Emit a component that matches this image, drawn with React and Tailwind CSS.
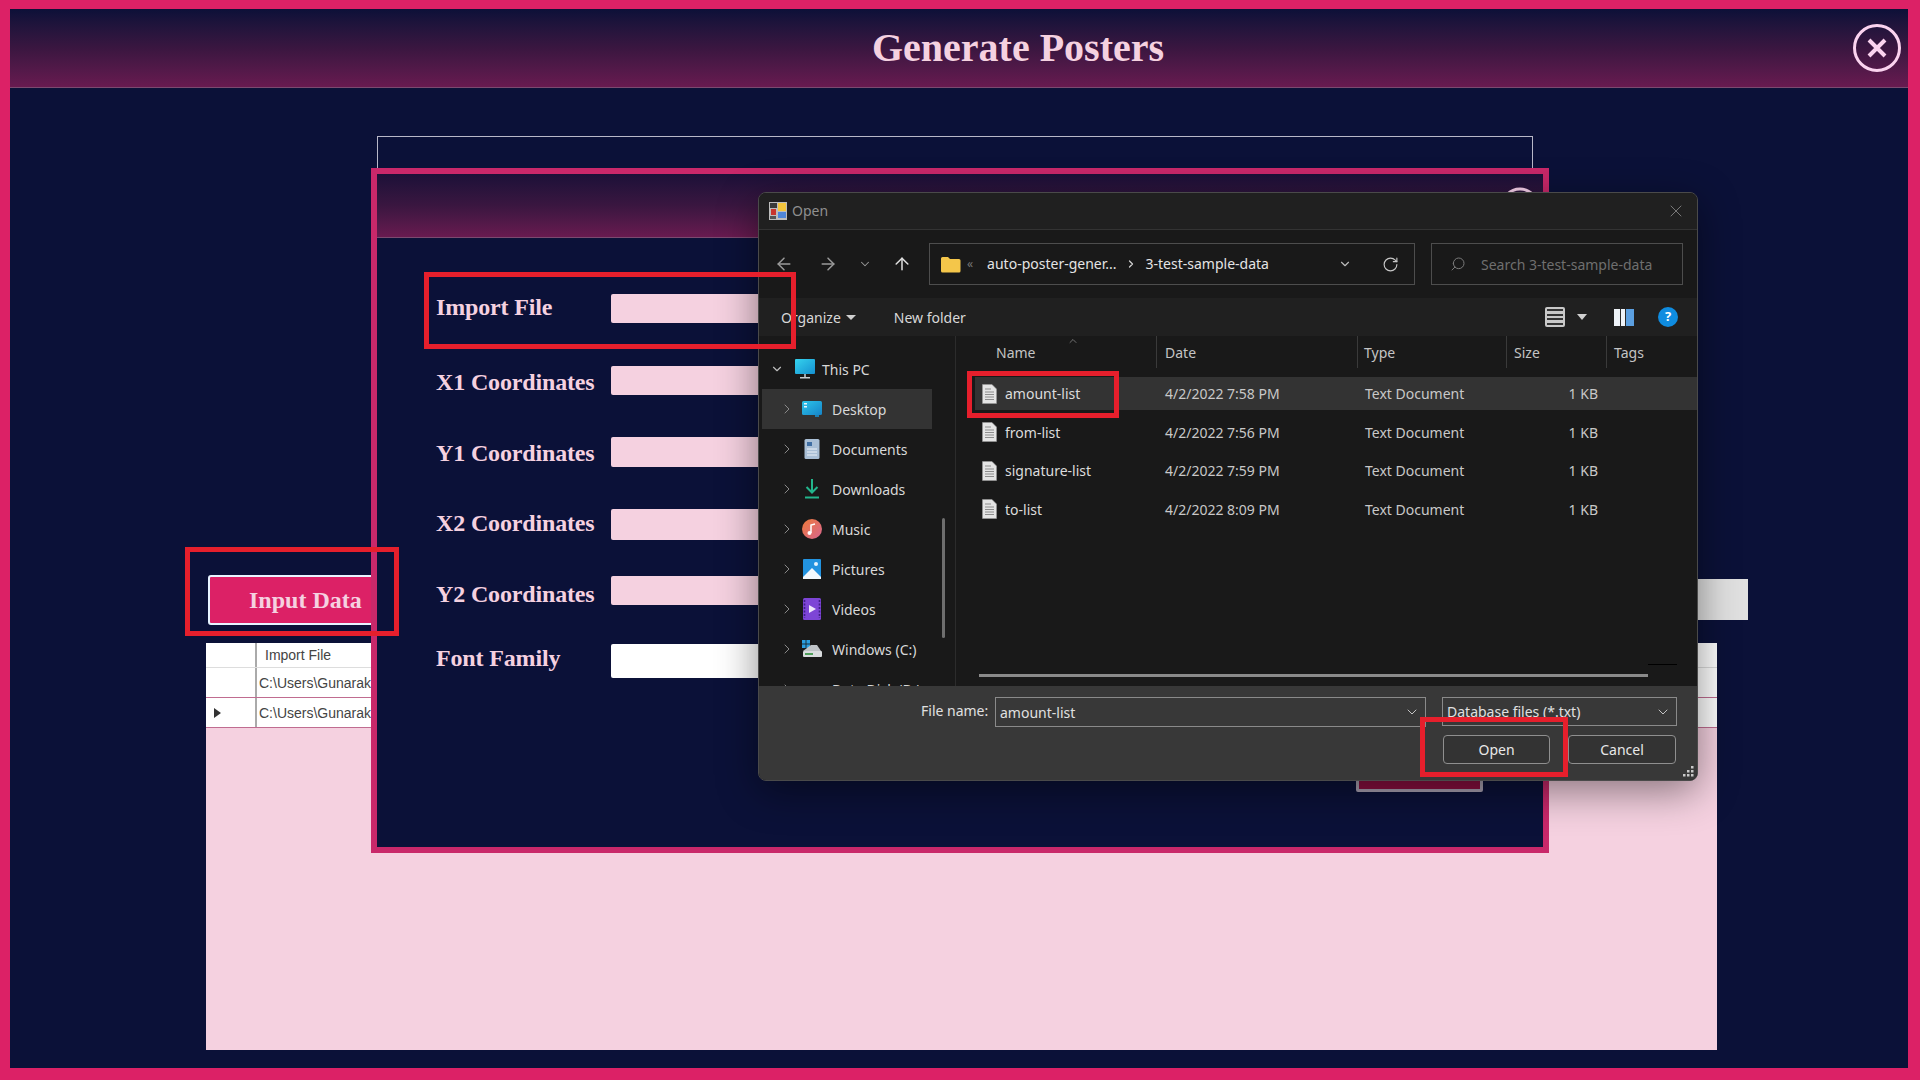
import React from 'react';
import { ArrowLeft, ArrowRight, ArrowUp, ChevronDown, ChevronRight, ChevronUp, RotateCw, Search, X } from 'lucide-react';

const serif = "font-['Liberation_Serif',serif] font-bold";
const ui = "font-['Noto_Sans',sans-serif]";

// form rows of the panel behind the dialog
const formRows = [
  { label: 'Import File', row: 'mt-[56px] h-[29px]', input: 'bg-[#f5d1e0]', text: '-mt-[3px]' },
  { label: 'X1 Coordinates', row: 'mt-[43px] h-[29px]', input: 'bg-[#f5d1e0]', text: 'mt-[3px]' },
  { label: 'Y1 Coordinates', row: 'mt-[42px] h-[30px]', input: 'bg-[#f5d1e0]', text: 'mt-[1px]' },
  { label: 'X2 Coordinates', row: 'mt-[42px] h-[31px]', input: 'bg-[#f5d1e0]', text: '-mt-[3px]' },
  { label: 'Y2 Coordinates', row: 'mt-[36px] h-[29px]', input: 'bg-[#f5d1e0]', text: 'mt-[7px]' },
  { label: 'Font Family', row: 'mt-[39px] h-[34px]', input: 'bg-white', text: '-mt-[6px]' },
];

const FileIcon = () => (
  <svg width="15" height="20" viewBox="0 0 15 20" className="shrink-0">
    <path d="M0.5 0.5H10L14.5 5V19.5H0.5Z" fill="#e4e4e4" stroke="#9a9a9a" strokeWidth="0.6" />
    <path d="M3 5H9M3 8H12M3 10.5H12M3 13H12M3 15.5H12" stroke="#8c8c8c" strokeWidth="1" />
  </svg>
);

const DesktopIcon = () => (
  <svg width="20" height="18" viewBox="0 0 20 18">
    <defs>
      <linearGradient id="deskGrad" x1="0" y1="0" x2="1" y2="1">
        <stop offset="0" stopColor="#2cc4ea" />
        <stop offset="1" stopColor="#1684c8" />
      </linearGradient>
    </defs>
    <rect x="0" y="1" width="20" height="14" rx="1.5" fill="url(#deskGrad)" />
    <rect x="2" y="3" width="3" height="1.5" fill="#e8f6fc" />
    <rect x="2" y="6" width="3" height="1.5" fill="#e8f6fc" />
    <rect x="13" y="15" width="4" height="2" fill="#1a7fb3" />
  </svg>
);

const DocumentsIcon = () => (
  <svg width="16" height="20" viewBox="0 0 16 20">
    <rect x="0.5" y="0" width="15" height="20" rx="1.5" fill="#a9bfd6" />
    <rect x="3" y="3" width="5" height="4" fill="#3f6ea3" />
    <path d="M3 10H13M3 13H13M3 16H13" stroke="#ecf2f8" strokeWidth="1.2" />
  </svg>
);

const DownloadsIcon = () => (
  <svg width="16" height="20" viewBox="0 0 16 20" fill="none" stroke="#23b58c" strokeWidth="2">
    <path d="M8 0V13M2.5 8L8 13.5L13.5 8" />
    <path d="M1 18.5H15" />
  </svg>
);

const MusicIcon = () => (
  <svg width="20" height="20" viewBox="0 0 20 20">
    <defs>
      <linearGradient id="musicGrad" x1="0" y1="0" x2="1" y2="1">
        <stop offset="0" stopColor="#ec7a3a" />
        <stop offset="1" stopColor="#d8658f" />
      </linearGradient>
    </defs>
    <circle cx="10" cy="10" r="10" fill="url(#musicGrad)" />
    <path d="M9 14V6L13 5" fill="none" stroke="#fff" strokeWidth="1.5" />
    <circle cx="7.5" cy="14" r="2" fill="#fff" />
  </svg>
);

const PicturesIcon = () => (
  <svg width="18" height="20" viewBox="0 0 18 20">
    <rect x="0" y="0" width="18" height="20" rx="1" fill="#2293e0" />
    <circle cx="13" cy="5" r="2" fill="#e6f4fd" />
    <path d="M0 18L9 9L18 18V20H0Z" fill="#f2f8fd" />
  </svg>
);

const VideosIcon = () => (
  <svg width="18" height="22" viewBox="0 0 18 22">
    <rect x="0" y="0" width="18" height="22" rx="1.5" fill="#7d45d6" />
    <path d="M6 7L13 11L6 15Z" fill="#efe6fb" />
    <path d="M1.5 2V20M16.5 2V20" stroke="#3f1e86" strokeWidth="1.6" strokeDasharray="2 1.5" />
  </svg>
);

const DriveIcon = () => (
  <svg width="20" height="18" viewBox="0 0 20 18">
    <rect x="0" y="0" width="3.6" height="3.6" fill="#2a9ee0" />
    <rect x="4.4" y="0" width="3.6" height="3.6" fill="#2a9ee0" />
    <rect x="0" y="4.4" width="3.6" height="3.6" fill="#2a9ee0" />
    <rect x="4.4" y="4.4" width="3.6" height="3.6" fill="#2a9ee0" />
    <path d="M9 5H15L19 11H1Z" fill="#bfc3c7" />
    <rect x="1" y="11" width="19" height="6" rx="1" fill="#d9dcde" />
    <rect x="3" y="13" width="8" height="2" fill="#4f9e5b" />
  </svg>
);

const ThisPcIcon = () => (
  <svg width="20" height="20" viewBox="0 0 20 20">
    <defs>
      <linearGradient id="pcGrad" x1="0" y1="0" x2="1" y2="1">
        <stop offset="0" stopColor="#35d3ee" />
        <stop offset="1" stopColor="#1590d0" />
      </linearGradient>
    </defs>
    <rect x="0" y="0" width="20" height="15" rx="1" fill="url(#pcGrad)" />
    <rect x="9" y="15" width="2" height="3" fill="#9aa4ab" />
    <rect x="5" y="18" width="10" height="1.5" fill="#c5ccd1" />
  </svg>
);

const AppIcon = () => (
  <svg width="18" height="18" viewBox="0 0 18 18">
    <rect x="0" y="0" width="18" height="18" fill="#bdbdbd" />
    <rect x="1" y="1" width="7" height="5" fill="#3a3a3a" />
    <rect x="9" y="1" width="8" height="8" fill="#f2c53d" />
    <rect x="2" y="7" width="5" height="6" fill="#c8352d" />
    <rect x="9" y="10" width="8" height="6" fill="#4f86d9" />
    <rect x="1" y="14" width="6" height="3" fill="#555" />
  </svg>
);

const navItems = [
  { name: 'Desktop', Icon: DesktopIcon, active: true },
  { name: 'Documents', Icon: DocumentsIcon },
  { name: 'Downloads', Icon: DownloadsIcon },
  { name: 'Music', Icon: MusicIcon },
  { name: 'Pictures', Icon: PicturesIcon },
  { name: 'Videos', Icon: VideosIcon },
  { name: 'Windows (C:)', Icon: DriveIcon },
  { name: 'Data Disk (D:)', Icon: null },
];

const files = [
  { name: 'amount-list', date: '4/2/2022 7:58 PM', selected: true },
  { name: 'from-list', date: '4/2/2022 7:56 PM' },
  { name: 'signature-list', date: '4/2/2022 7:59 PM' },
  { name: 'to-list', date: '4/2/2022 8:09 PM' },
];

const RedBox = ({ className }) => (
  <div className={`absolute border-[5px] border-[#e61f2c] pointer-events-none ${className}`} />
);

function OpenDialog() {
  return (
    <div className={`${ui} absolute left-[758px] top-[192px] w-[940px] h-[589px] rounded-[8px] overflow-hidden flex flex-col text-[14px] text-[#d8d8d8] bg-[#191919] border border-[#4a4a4a] shadow-[0_10px_40px_rgba(0,0,0,0.45)]`}>
      {/* Title bar */}
      <div className="h-[37px] shrink-0 bg-[#202020] border-b border-[#333] flex items-center pl-[10px] pr-[11px]">
        <AppIcon />
        <span className="ml-[5px] -mt-[2px] text-[#8f8f8f]">Open</span>
        <X className="ml-auto h-[20px] w-[20px] text-[#8a8a8a]" strokeWidth={1} />
      </div>

      {/* Address bar */}
      <div className="h-[68px] shrink-0 flex items-center pl-[15px]">
        <ArrowLeft className="h-[20px] w-[20px] text-[#9a9a9a]" strokeWidth={1.8} />
        <ArrowRight className="ml-[24px] h-[20px] w-[20px] text-[#9a9a9a]" strokeWidth={1.8} />
        <ChevronDown className="ml-[20px] h-[14px] w-[14px] text-[#9a9a9a]" strokeWidth={1.8} />
        <ArrowUp className="ml-[20px] h-[20px] w-[20px] text-[#e0e0e0]" strokeWidth={1.8} />
        <div className="ml-[17px] w-[486px] h-[42px] border border-[#4d4d4d] flex items-center pl-[10px] pr-[15px]">
          <svg width="21" height="18" viewBox="0 0 21 18" className="shrink-0">
            <path d="M1 3.5A1.5 1.5 0 0 1 2.5 2H8L10 4H19A1.5 1.5 0 0 1 20.5 5.5V16A1.5 1.5 0 0 1 19 17.5H2.5A1.5 1.5 0 0 1 1 16Z" fill="#f4c64a" />
          </svg>
          <span className="ml-[6px] text-[12px] text-[#777]">«</span>
          <span className="ml-[14px] -mt-[2px] text-[#e4e4e4]">auto-poster-gener...</span>
          <ChevronRight className="ml-[8px] h-[12px] w-[12px] text-[#d0d0d0]" strokeWidth={2.5} />
          <span className="ml-[9px] -mt-[2px] text-[#e4e4e4]">3-test-sample-data</span>
          <ChevronDown className="ml-auto h-[14px] w-[14px] text-[#bbb]" strokeWidth={2} />
          <RotateCw className="ml-[30px] h-[17px] w-[17px] text-[#c8c8c8]" strokeWidth={1.6} />
        </div>
        <div className="ml-[16px] w-[252px] h-[42px] border border-[#4d4d4d] flex items-center pl-[18px] text-[#6f6f6f]">
          <Search className="h-[16px] w-[16px] -scale-x-100 text-[#7a7a7a]" strokeWidth={1.5} />
          <span className="ml-[15px] whitespace-nowrap">Search 3-test-sample-data</span>
        </div>
      </div>

      {/* Command bar */}
      <div className="h-[38px] shrink-0 bg-[#202020] flex items-center pl-[22px] pr-[19px]">
        <span>Organize</span>
        <span className="ml-[5px] w-0 h-0 border-x-[5px] border-x-transparent border-t-[5px] border-t-[#d0d0d0]" />
        <span className="ml-[38px]">New folder</span>
        <div className="ml-auto flex items-center">
          <div className="w-[20px] h-[20px] rounded-[2px] bg-[#c8c8c8] flex flex-col justify-evenly px-[2px]">
            <div className="h-[2px] bg-[#333]" />
            <div className="h-[2px] bg-[#333]" />
            <div className="h-[2px] bg-[#333]" />
            <div className="h-[2px] bg-[#333]" />
          </div>
          <span className="ml-[12px] w-0 h-0 border-x-[5px] border-x-transparent border-t-[6px] border-t-[#d0d0d0]" />
          <div className="ml-[27px] w-[20px] h-[17px] flex">
            <div className="w-[6px] bg-[#eef3f8]" />
            <div className="w-px bg-[#2a2a2a]" />
            <div className="w-[4px] bg-[#eef3f8]" />
            <div className="w-px bg-[#2a2a2a]" />
            <div className="flex-1 bg-[#5b9fe0]" />
          </div>
          <div className="ml-[24px] w-[20px] h-[20px] rounded-full bg-[#0f8ce0] text-white text-[13px] font-bold flex items-center justify-center">?</div>
        </div>
      </div>

      {/* Nav pane and file list */}
      <div className="h-[350px] shrink-0 flex overflow-hidden">
        <div className="relative w-[197px] shrink-0 border-r border-[#2c2c2c] pt-[13px] overflow-hidden">
          <div className="h-[40px] flex items-center pl-[11px]">
            <ChevronDown className="h-[14px] w-[14px] text-[#bdbdbd]" strokeWidth={2} />
            <span className="ml-[11px]"><ThisPcIcon /></span>
            <span className="ml-[7px]">This PC</span>
          </div>
          {navItems.map(({ name, Icon, active }) => (
            <div key={name} className={`ml-[3px] w-[170px] h-[40px] flex items-center pl-[17px] ${active ? 'bg-[#333333]' : ''}`}>
              <ChevronRight className="h-[16px] w-[16px] text-[#8a8a8a] shrink-0" strokeWidth={1.5} />
              <span className="ml-[7px] w-[20px] flex justify-center shrink-0">{Icon && <Icon />}</span>
              <span className="ml-[10px] whitespace-nowrap">{name}</span>
            </div>
          ))}
          <div className="absolute left-[183px] top-[182px] w-[3px] h-[120px] bg-[#6e6e6e] rounded-full" />
        </div>

        <div className="relative flex-1 min-w-0">
          <div className="h-[36px] mb-[5px] flex items-start text-[#c4c4c4]">
            <div className="w-[201px] h-[32px] border-r border-[#3a3a3a] pl-[40px] flex items-center relative">
              Name
              <ChevronUp className="absolute left-[111px] -top-[1px] h-[12px] w-[12px] text-[#8f8f8f]" strokeWidth={1.5} />
            </div>
            <div className="w-[201px] h-[32px] border-r border-[#3a3a3a] pl-[8px] flex items-center">Date</div>
            <div className="w-[149px] h-[32px] border-r border-[#3a3a3a] pl-[6px] flex items-center">Type</div>
            <div className="w-[100px] h-[32px] border-r border-[#3a3a3a] pl-[7px] flex items-center">Size</div>
            <div className="pl-[7px] h-[32px] flex items-center">Tags</div>
          </div>
          {files.map((f) => (
            <div key={f.name} className={`ml-[19px] h-[33px] mb-[5.6px] flex items-center text-[#c8c8c8] ${f.selected ? 'bg-[#333333]' : ''}`}>
              <div className="w-[30px] pl-[7px]"><FileIcon /></div>
              <span className="w-[160px] text-[#dcdcdc]">{f.name}</span>
              <span className="w-[200px]">{f.date}</span>
              <span className="w-[150px]">Text Document</span>
              <span className="w-[83px] text-right">1 KB</span>
            </div>
          ))}
          <div className="absolute left-[23px] top-[338px] w-[669px] h-[3px] bg-[#8a8a8a]" />
          <div className="absolute left-[692px] top-[328px] w-[29px] h-px bg-black" />
        </div>
      </div>

      {/* File name row and buttons */}
      <div className="relative flex-1 bg-[#383838]">
        <div className="pt-[11px] flex items-start text-[#e0e0e0]">
          <span className="ml-[162px] mt-[3px] w-[74px] whitespace-nowrap">File name:</span>
          <div className="w-[431px] h-[30px] border border-[#8a8a8a] flex items-center pl-[4px] pr-[5px]">
            amount-list
            <ChevronDown className="ml-auto h-[16px] w-[16px] text-[#c4c4c4]" strokeWidth={1.5} />
          </div>
          <div className="ml-[16px] w-[235px] h-[29px] border border-[#8a8a8a] flex items-center pl-[4px] pr-[5px]">
            Database files (*.txt)
            <ChevronDown className="ml-auto h-[16px] w-[16px] text-[#c4c4c4]" strokeWidth={1.5} />
          </div>
        </div>
        <div className="mt-[8px] flex justify-end gap-[18px] pr-[21px]">
          <div className="w-[107px] h-[29px] rounded-[4px] border border-[#8f8f8f] bg-[#333333] flex items-center justify-center text-[#e8e8e8]">Open</div>
          <div className="w-[108px] h-[29px] rounded-[4px] border border-[#8f8f8f] bg-[#333333] flex items-center justify-center text-[#e8e8e8]">Cancel</div>
        </div>
        <svg width="12" height="12" viewBox="0 0 12 12" className="absolute right-[2px] bottom-[2px]" fill="#c8c8c8">
          <rect x="8" y="0" width="2.5" height="2.5" />
          <rect x="4" y="4" width="2.5" height="2.5" />
          <rect x="8" y="4" width="2.5" height="2.5" />
          <rect x="0" y="8" width="2.5" height="2.5" />
          <rect x="4" y="8" width="2.5" height="2.5" />
          <rect x="8" y="8" width="2.5" height="2.5" />
        </svg>
      </div>
    </div>
  );
}

function App() {
  return (
    <div className="relative w-[1920px] h-[1080px] overflow-hidden bg-[#dc2166] pl-[10px] pr-[12px] pt-[9px] pb-[12px] flex flex-col">
      {/* Header */}
      <header className="relative h-[79px] shrink-0 bg-gradient-to-b from-[#0c1038] via-[#3a1640] to-[#681a50] border-b border-[#7a4a70] flex items-center justify-center">
        <h1 className={`${serif} ml-[118px] text-[40px] text-[#f5d1e0]`}>Generate Posters</h1>
        <svg width="48" height="48" viewBox="0 0 48 48" fill="none" stroke="#fbd3ef" className="absolute right-[7px] top-[15px]">
          <circle cx="24" cy="24" r="22.5" strokeWidth="3" />
          <path d="M16 16L32 32M32 16L16 32" strokeWidth="4" />
        </svg>
      </header>
      <main className="flex-1 bg-[#0b1138]" />

      {/* Outlined box behind the panel */}
      <div className="absolute left-[377px] top-[136px] w-[1156px] h-[40px] border border-[#b8b8c8]" />

      {/* Input Data button and the grey button on the far side */}
      <div className={`${serif} absolute left-[208px] top-[575px] w-[240px] h-[50px] bg-[#dc2166] border-2 border-[#e8f4ff] rounded-[3px] text-[24px] text-[#f5d1e0] pl-[39px] flex items-center`}>Input Data</div>
      <div className="absolute left-[1690px] top-[579px] w-[58px] h-[41px] bg-[#e0e0e0]" />

      {/* Data grid */}
      <div className="absolute left-[206px] top-[643px] w-[1511px] h-[407px] bg-[#f5d1e0] flex flex-col font-['Liberation_Sans',sans-serif] text-[14px] text-[#444]">
        <div className="h-[25px] flex bg-white border-b border-[#ddd]">
          <div className="w-[51px] border-r-2 border-[#aaa]" />
          <div className="flex-1 pl-[8px] pt-[1px] flex items-center">Import File</div>
        </div>
        <div className="h-[30px] flex bg-white border-b border-[#c06c90]">
          <div className="w-[51px] border-r-2 border-[#aaa]" />
          <div className="flex-1 pl-[2px] pt-[2px] flex items-center">C:\Users\Gunarakulan\Desktop</div>
        </div>
        <div className="h-[30px] flex bg-white border-b border-[#c06c90]">
          <div className="w-[51px] border-r-2 border-[#aaa] flex items-center pl-[8px]">
            <span className="w-0 h-0 border-y-[5px] border-y-transparent border-l-[7px] border-l-[#333]" />
          </div>
          <div className="flex-1 pl-[2px] pt-[2px] flex items-center">C:\Users\Gunarakulan\Desktop</div>
        </div>
      </div>

      {/* Panel with the form */}
      <div className="absolute left-[371px] top-[168px] w-[1178px] h-[685px] border-[6px] border-[#c9286a] bg-[#0b1138] flex flex-col">
        <div className="relative h-[64px] shrink-0 bg-gradient-to-b from-[#1c1038] via-[#3a1640] to-[#681a50] border-b border-[#7a4a70]">
          <svg width="40" height="40" viewBox="0 0 40 40" fill="none" stroke="#fbd3ef" strokeWidth="3" className="absolute left-[1123px] top-[13px]">
            <circle cx="20" cy="20" r="18" />
          </svg>
        </div>
        <div className="pl-[59px] flex flex-col">
          {formRows.map((r) => (
            <div key={r.label} className={`flex items-center ${r.row}`}>
              <span className={`${serif} ${r.text} w-[175px] whitespace-nowrap text-[24px] tracking-[-0.15px] text-[#f5d1e0]`}>{r.label}</span>
              <div className={`w-[240px] h-full rounded-[2px] ${r.input}`} />
            </div>
          ))}
        </div>
        <div className="absolute left-[979px] top-[560px] w-[127px] h-[58px] bg-[#8b1040] border-[3px] border-[#a8a0b0] rounded-[2px]" />
      </div>

      <OpenDialog />

      <RedBox className="left-[424px] top-[272px] w-[372px] h-[77px]" />
      <RedBox className="left-[185px] top-[547px] w-[214px] h-[89px]" />
      <RedBox className="left-[967px] top-[371px] w-[152px] h-[47px]" />
      <RedBox className="left-[1420px] top-[717px] w-[148px] h-[60px]" />
    </div>
  );
}

export default App;
